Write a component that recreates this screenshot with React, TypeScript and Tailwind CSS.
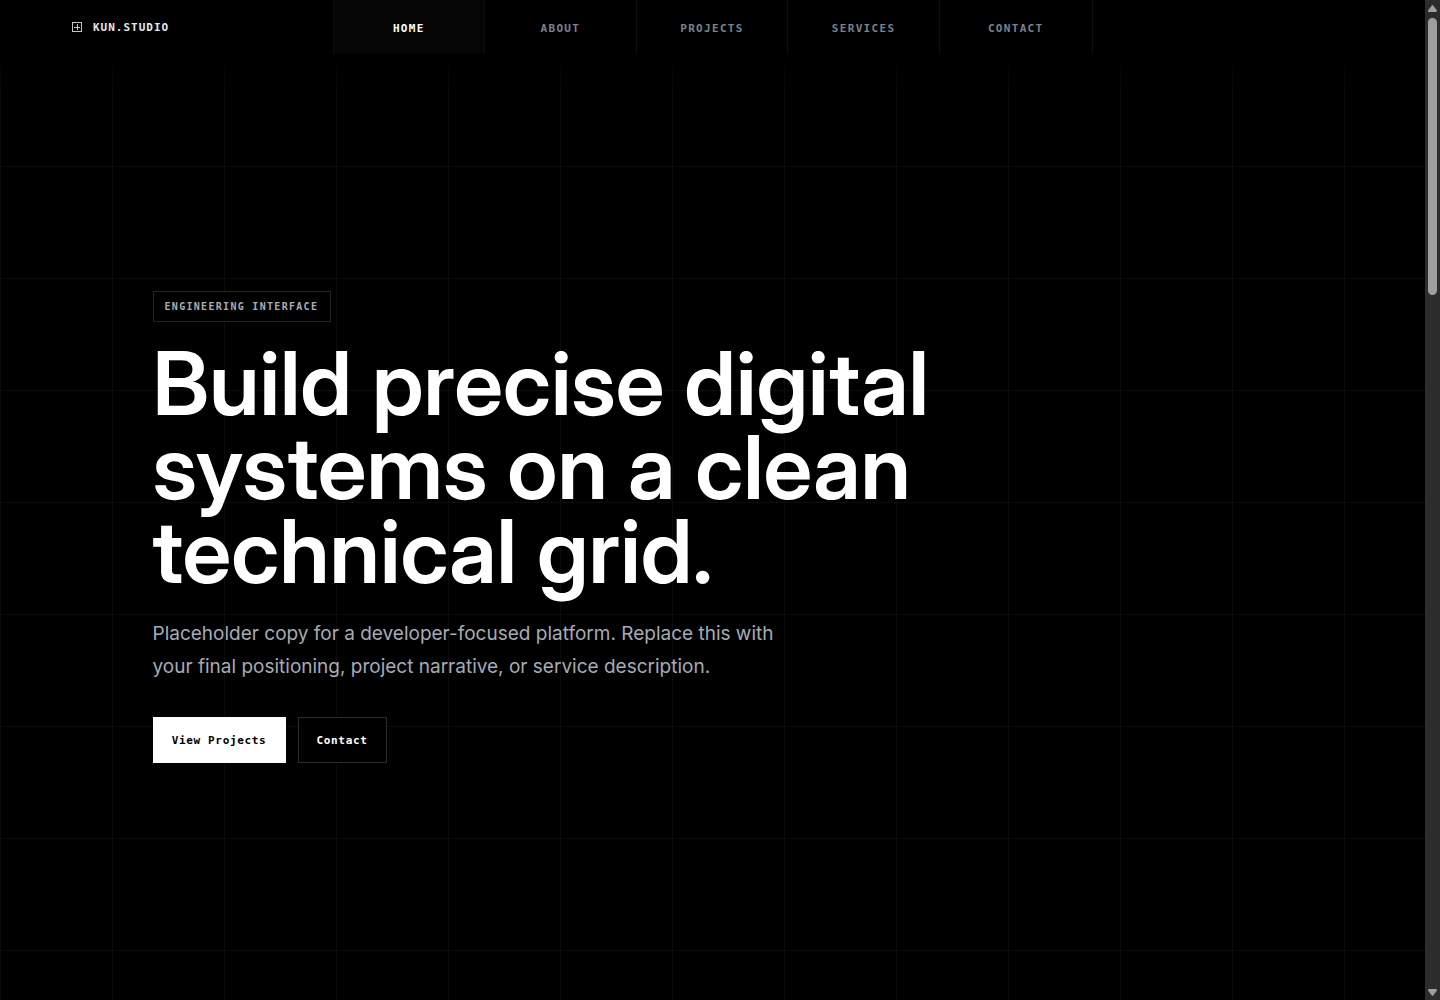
const navItems = ["Home", "About", "Projects", "Services", "Contact"];

const mono = "font-['DejaVu_Sans_Mono',monospace] font-bold";

function Logo() {
  return (
    <a href="#home" className={`${mono} flex items-center gap-[11px] text-[11px] tracking-[0.09em] text-[#e5e7eb]`}>
      <svg width="10" height="10" viewBox="0 0 10 10" fill="none" stroke="#c4c4c4" shapeRendering="crispEdges" aria-hidden="true">
        <rect x="0.5" y="0.5" width="9" height="9" />
        <path d="M5.5 2v6M2 5.5h6" />
      </svg>
      <span className="pt-[3px]">KUN.STUDIO</span>
    </a>
  );
}

function Header() {
  return (
    <header className="grid h-[54px] shrink-0 grid-cols-[1fr_760px_1fr] border-b border-[#030303] bg-black">
      <div className="flex items-center pl-[72px]">
        <Logo />
      </div>
      <nav className="grid grid-cols-5 border-x border-[#0e0e0e]" aria-label="Main">
        {navItems.map((item, i) => (
          <a
            key={item}
            href={`#${item.toLowerCase()}`}
            aria-current={i === 0 ? "page" : undefined}
            className={`${mono} flex items-center justify-center border-r border-[#0e0e0e] pt-1.5 text-[11px] tracking-[0.12em] uppercase last:border-r-0 ${
              i === 0 ? "bg-[#060606] text-white" : "text-[#7b828c]"
            }`}
          >
            {item}
          </a>
        ))}
      </nav>
    </header>
  );
}

function Hero() {
  return (
    <main className="relative flex flex-1 flex-col justify-center">
      <div
        aria-hidden="true"
        className="absolute inset-0 bg-[linear-gradient(to_right,#0c0c0c_1px,transparent_1px),linear-gradient(to_bottom,#0c0c0c_1px,transparent_1px)] mask-[linear-gradient(to_bottom,transparent,black_48px)] bg-[size:112px_112px]"
      />
      <section className="relative mx-auto w-full max-w-[1120px]">
        <p className={`${mono} flex h-[31px] w-fit items-center border border-[#242424] bg-black pr-3 pl-[11px] text-[10px] tracking-[0.13em] text-[#a8adb6] uppercase`}>
          Engineering Interface
        </p>
        <h1 className="mt-[19px] max-w-[820px] font-['Inter_Display','Inter',sans-serif] text-[88px] leading-[84px] font-semibold text-white">
          Build precise digital systems on a clean technical grid.
        </h1>
        <p className="mt-6 max-w-[640px] text-[19px] leading-[33px] text-[#a7abb4]">
          Placeholder copy for a developer-focused platform. Replace this with your final positioning, project
          narrative, or service description.
        </p>
        <div className={`${mono} mt-[34px] flex gap-3 text-[11px] tracking-[0.06em]`}>
          <button type="button" className="h-[46px] min-w-[133px] border border-white bg-white px-[18px] pt-0.5 text-black">
            View Projects
          </button>
          <button type="button" className="h-[46px] min-w-[89px] border border-[#2b2b2b] bg-black px-[18px] pt-0.5 text-white">
            Contact
          </button>
        </div>
      </section>
    </main>
  );
}

function ScrollRail() {
  return (
    <div aria-hidden="true" className="flex w-[15px] shrink-0 flex-col items-center bg-[#2c2c2c] pt-[5px] pb-1">
      <svg width="9" height="7" viewBox="0 0 9 7" fill="#9f9f9f">
        <path d="M3.8 .4Q4.5-.4 5.2.4L8.8 5.3Q9.2 7 8 7H1Q-.2 7 .2 5.3Z" />
      </svg>
      <div className="mt-[6px] h-[277px] w-[9px] rounded-full bg-[#9f9f9f]" />
      <svg className="mt-auto" width="9" height="7" viewBox="0 0 9 7" fill="#9f9f9f">
        <path d="M3.8 6.6Q4.5 7.4 5.2 6.6L8.8 1.7Q9.2 0 8 0H1Q-.2 0 .2 1.7Z" />
      </svg>
    </div>
  );
}

export default function App() {
  return (
    <div className="flex min-h-screen bg-black font-['Inter',sans-serif]">
      <div className="flex min-w-0 flex-1 flex-col">
        <Header />
        <Hero />
      </div>
      <ScrollRail />
    </div>
  );
}
